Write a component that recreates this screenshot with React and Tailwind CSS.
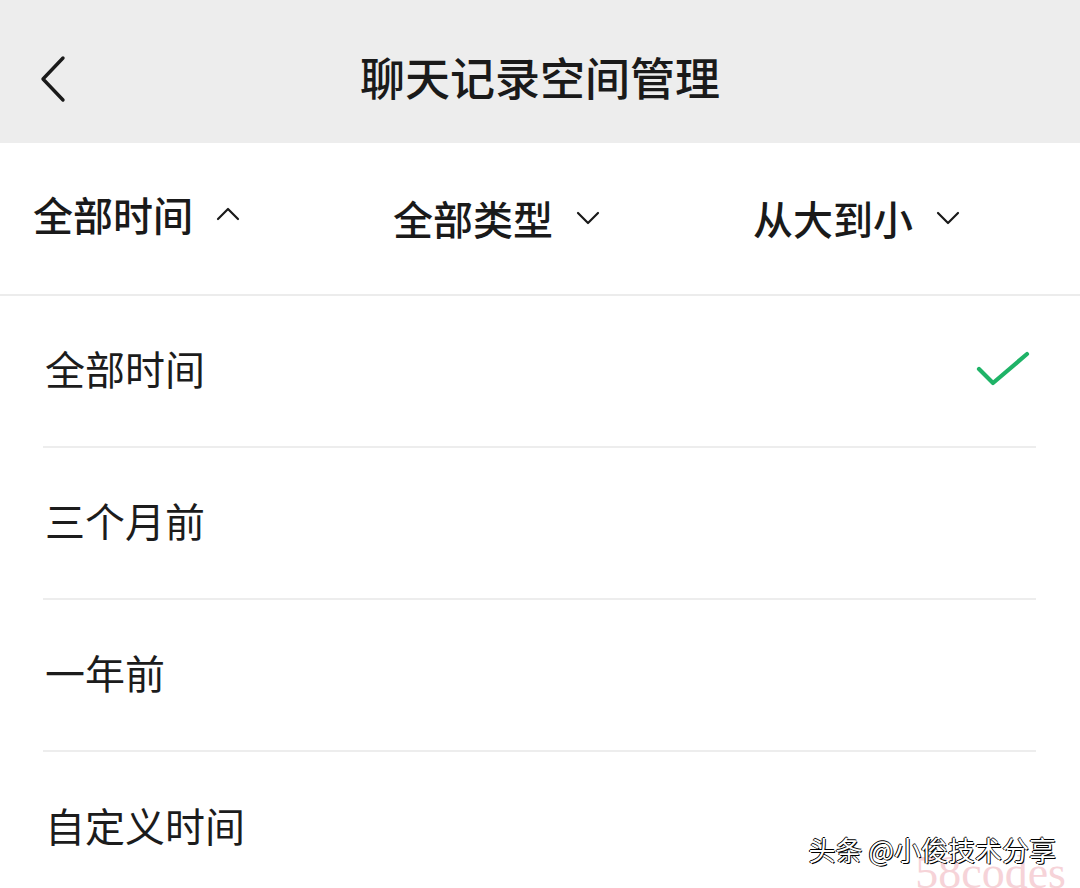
import { useState } from 'react';

const font = { fontFamily: '"Noto Sans CJK SC", "Noto Sans", sans-serif' };

function Chevron({ up }) {
  return (
    <svg width="26" height="16" viewBox="0 0 26 16" fill="none" stroke="#1a1a1a" strokeWidth="2.2" strokeLinecap="round" strokeLinejoin="round">
      {up ? <path d="M3 13 L13 3 L23 13" /> : <path d="M3 3 L13 13 L23 3" />}
    </svg>
  );
}

const filters = [
  { label: '全部时间', open: true },
  { label: '全部类型', open: false },
  { label: '从大到小', open: false },
];

const options = ['全部时间', '三个月前', '一年前', '自定义时间'];

export default function App() {
  const [selected, setSelected] = useState(0);

  return (
    <div className="relative w-[1080px] h-[888px] overflow-hidden bg-white text-[#1a1a1a]" style={font}>
      {/* 顶部导航 */}
      <div className="relative flex h-[143px] items-center justify-center bg-[#ededed]">
        <div className="absolute left-[38px] top-[55px]">
          <svg width="30" height="48" viewBox="0 0 30 48" fill="none" stroke="#1a1a1a" strokeWidth="3.4" strokeLinecap="round" strokeLinejoin="round">
            <path d="M25 3 L5 24 L25 45" />
          </svg>
        </div>
        <h1 className="pt-[10px] text-[45px] font-medium leading-none">聊天记录空间管理</h1>
      </div>

      {/* 筛选栏 */}
      <div className="grid h-[153px] grid-cols-3 border-b-2 border-[#ececec]">
        {filters.map((f, i) => (
          <div key={f.label} className={`flex items-center gap-[22px] pl-[33px] ${i === 0 ? 'pb-[10px]' : 'pb-[2px]'}`}>
            <span className="text-[40px] font-medium leading-none">{f.label}</span>
            <Chevron up={f.open} />
          </div>
        ))}
      </div>

      {/* 时间选项 */}
      <div className="ml-[43px] mr-[44px]">
        {options.map((o, i) => (
          <button
            key={o}
            onClick={() => setSelected(i)}
            className={`flex h-[152px] w-full items-center justify-between pb-[6px] text-left ${i < options.length - 1 ? 'border-b-2 border-[#ededed]' : ''}`}
          >
            <span className="pl-[2px] text-[40px] leading-none text-[#1c1c1c]">{o}</span>
            {selected === i && (
              <svg width="56" height="42" viewBox="0 0 56 42" fill="none" stroke="#1fb367" strokeWidth="4.2" strokeLinecap="round" strokeLinejoin="round" className="mr-[4px] mt-[4px]">
                <path d="M3 20 L17 34 L51 5" />
              </svg>
            )}
          </button>
        ))}
      </div>

      {/* 水印 */}
      <div className="absolute bottom-[-8px] right-[14px] text-[46px] leading-none text-[#f6d3d8]" style={{ fontFamily: '"Liberation Serif", serif' }}>
        58codes
      </div>
      <div className="absolute bottom-[22px] right-[24px]">
        <span className="text-[27px] leading-none text-white [text-shadow:1px_1px_0_#000,-1px_0_0_#000,0_-1px_0_#000]">头条 @小俊技术分享</span>
      </div>
    </div>
  );
}
